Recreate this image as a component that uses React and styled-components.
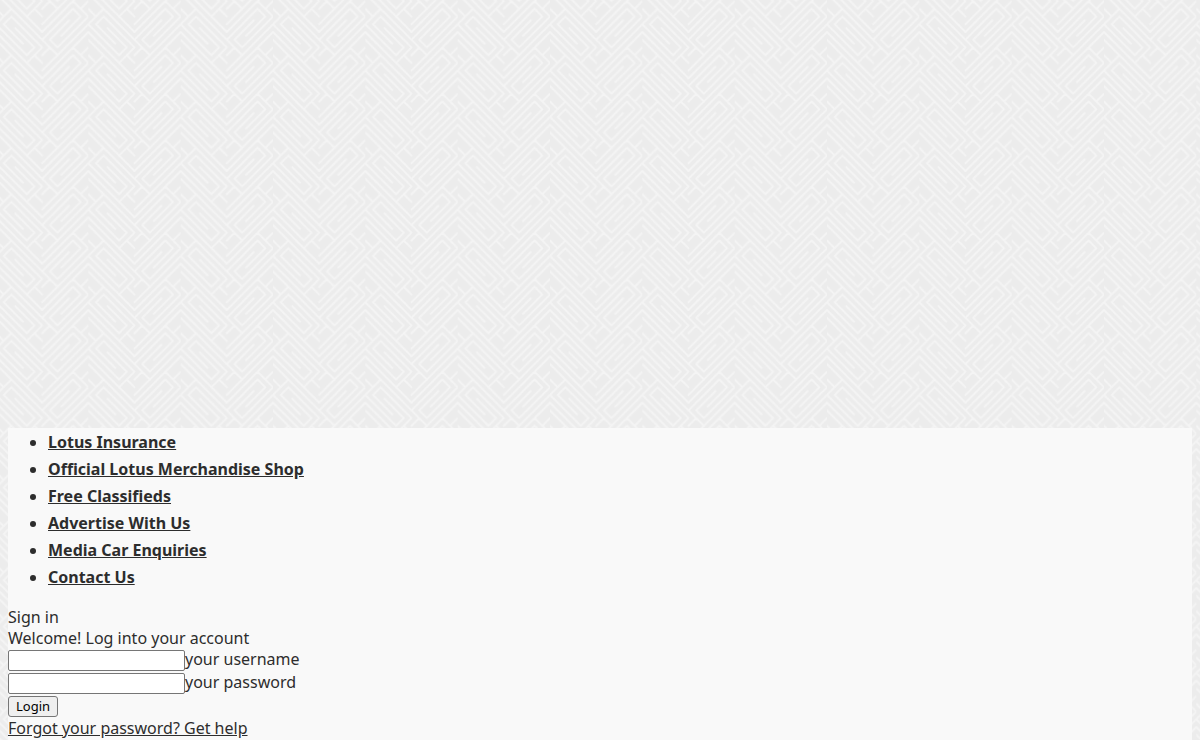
import React from 'react'
import styled, { createGlobalStyle } from 'styled-components'

// interlocking key lattice, three repeats per tile in each direction
const TILE = `
<svg xmlns='http://www.w3.org/2000/svg' width='277' height='139' viewBox='0 0 72 36' preserveAspectRatio='none'>
  <defs>
    <path id='k' d='M0 0L12 12M0 2L12 14M4 6L0 10L8 18L10 16L5 11M8 20L12 16L4 8L2 10L7 15M2 8L0 6M10 18L12 20'/>
    <g id='c'><use href='#k' y='-24'/><use href='#k' y='-12'/><use href='#k'/><use href='#k' y='12'/></g>
    <pattern id='p' width='24' height='12' patternUnits='userSpaceOnUse'>
      <g fill='none' stroke='#f4f4f4' stroke-width='0.5' stroke-linecap='round' stroke-linejoin='round'>
        <use href='#c'/>
        <use href='#c' transform='matrix(-1 0 0 1 24 -2)'/>
      </g>
    </pattern>
  </defs>
  <rect width='72' height='36' fill='url(#p)'/>
</svg>`

const GlobalStyle = createGlobalStyle`
  body {
    margin: 0;
    color: #2d2d2d;
    background-color: #ececec;
    background-image: url("data:image/svg+xml,${encodeURIComponent(TILE).replace(/'/g, '%27')}");
    background-position: -4px 32px;
    font-family: 'Noto Sans', sans-serif;
    font-size: 16px;
    line-height: 21px;
  }
`
const Page = styled.div`
  min-height: 100vh;
  display: flex;
  flex-direction: column;
  padding: 0 8px;
  box-sizing: border-box;
`
const AdSlot = styled.div`
  height: 428px;
`
const Panel = styled.main`
  flex: 1;
  background-color: #f9f9f9;
`
const Menu = styled.ul`
  margin: 0 0 16px;
  padding: 1px 0 0 40px;
`
const MenuItem = styled.li`
  font-weight: bold;
  line-height: 27px;
`
const Link = styled.a`
  color: #2d2d2d;
  text-decoration: underline;
`
const Row = styled.div`
  display: flex;
  align-items: center;
  height: 23px;
`
const Label = styled.label`
  padding-bottom: 2px;
`
const TextInput = styled.input`
  box-sizing: border-box;
  width: 177px;
  height: 21px;
  border: 1px solid #767676;
  border-radius: 2px;
  background-color: #ffffff;
`
const LoginButton = styled.button`
  box-sizing: border-box;
  height: 21px;
  padding: 0 7px;
  border: 1px solid #767676;
  border-radius: 3px;
  background-color: #efefef;
  color: #000000;
  font-family: 'Noto Sans', sans-serif;
  font-size: 13px;
  line-height: 19px;
`

const LINKS = [
  'Lotus Insurance',
  'Official Lotus Merchandise Shop',
  'Free Classifieds',
  'Advertise With Us',
  'Media Car Enquiries',
  'Contact Us'
]

const Field = ({ id, type, label }) => (
  <Row>
    <TextInput id={id} name={id} type={type} />
    <Label htmlFor={id}>{label}</Label>
  </Row>
)

const App = () => (
  <>
    <GlobalStyle />
    <Page>
      <AdSlot />
      <Panel>
        <Menu>
          {LINKS.map(title => (
            <MenuItem key={title}>
              <Link href="#">{title}</Link>
            </MenuItem>
          ))}
        </Menu>
        <div>Sign in</div>
        <div>Welcome! Log into your account</div>
        <form>
          <Field id="username" type="text" label="your username" />
          <Field id="password" type="password" label="your password" />
          <Row>
            <LoginButton type="button">Login</LoginButton>
          </Row>
        </form>
        <Link href="#">Forgot your password? Get help</Link>
      </Panel>
    </Page>
  </>
)

export default App
